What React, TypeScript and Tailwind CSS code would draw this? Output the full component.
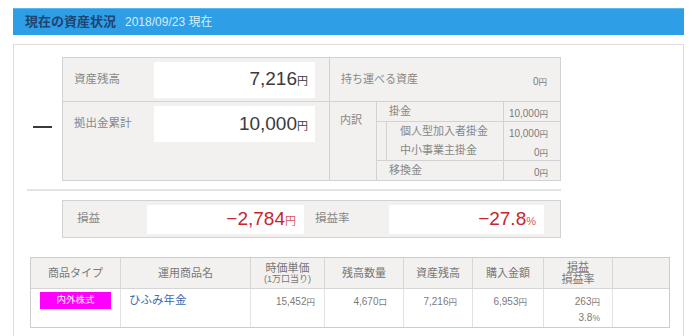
import React from "react";

const border = "border-[#d2d2d2]";

const Yen: React.FC<{ v: string; big?: boolean; red?: boolean; unit?: string }> = ({ v, big, red, unit = "円" }) => (
  <span className={`whitespace-nowrap ${red ? "text-[#c4262e]" : big ? "text-[#3a3a3a]" : "text-[#7a7a7a]"}`}>
    <span className={big ? "text-[19px]" : "text-[10px]"}>{v}</span>
    <span className={`${big ? "text-[11px]" : "text-[8.5px]"} ${red ? "text-[#d9575d]" : ""}`}>{unit}</span>
  </span>
);

const SubRow: React.FC<{ label: string; value: string; indent?: boolean }> = ({ label, value, indent }) => (
  <div className="flex h-[19px] items-center">
    <span className={`flex-1 text-[11px] text-[#888] ${indent ? "pl-[13px]" : "pl-[12px]"}`}>{label}</span>
    <div className={`w-[57px] h-full border-l ${border} flex items-center justify-end pr-[12px]`}>
      <Yen v={value} />
    </div>
  </div>
);

const cols = [
  { w: "w-[90px]", h: "商品タイプ" },
  { w: "w-[130px]", h: "運用商品名" },
  { w: "w-[74px]", h: "時価単価" },
  { w: "w-[79px]", h: "残高数量" },
  { w: "w-[69px]", h: "資産残高" },
  { w: "w-[71px]", h: "購入金額" },
  { w: "w-[69px]", h: "損益" },
];

export default function App() {
  return (
    <div className="w-[700px] h-[336px] overflow-hidden bg-white font-['Liberation_Sans','Noto_Sans_CJK_JP',sans-serif]">
      <div className="mt-[8px] ml-[13px] w-[671px] h-[27px] bg-[#2e9ee6] border-t border-[#5db6ee] flex items-center pl-[12px]">
        <span className="text-[13px] font-bold text-[#1f4470]">現在の資産状況</span>
        <span className="ml-[9px] text-[12px] text-[#d8ecfb]">2018/09/23 現在</span>
      </div>

      <div className="mt-[9px] ml-[13px] w-[671px] h-[300px] border border-b-0 border-[#dcdcdc] pt-[12px]">
        {/* summary */}
        <div className="flex">
          <div className="w-[48px] pt-[69px]">
            <div className="ml-[19px] w-[19px] h-[2px] bg-[#3a3a3a]" />
          </div>
          <div className={`w-[499px] border ${border} bg-[#f2f1f0] flex`}>
            <div className={`w-[267px] border-r ${border}`}>
              <div className={`h-[44px] border-b ${border} flex items-center pl-[11px] pr-[14px]`}>
                <span className="text-[11.5px] text-[#888]">資産残高</span>
                <div className="ml-auto w-[161px] h-[36px] bg-white flex items-center justify-end pr-[7px]">
                  <Yen v="7,216" big />
                </div>
              </div>
              <div className="h-[78px] pt-[4px] pl-[11px] pr-[14px]">
                <div className="flex items-center h-[36px]">
                  <span className="text-[11.5px] text-[#888]">拠出金累計</span>
                  <div className="ml-auto w-[161px] h-[36px] bg-white flex items-center justify-end pr-[7px]">
                    <Yen v="10,000" big />
                  </div>
                </div>
              </div>
            </div>
            <div className="flex-1">
              <div className={`h-[44px] border-b ${border} flex items-center pl-[11px] pr-[13px]`}>
                <span className="text-[11px] text-[#888]">持ち運べる資産</span>
                <span className="ml-auto"><Yen v="0" /></span>
              </div>
              <div className="flex h-[78px]">
                <div className={`w-[47px] border-r ${border} pl-[10px] pt-[10px] text-[11px] text-[#888]`}>内訳</div>
                <div className="flex-1">
                  <div className={`border-b ${border}`}>
                    <SubRow label="掛金" value="10,000" />
                  </div>
                  <div className={`flex border-b ${border}`}>
                    <div className={`w-[10px] border-r ${border}`} />
                    <div className="flex-1">
                      <SubRow label="個人型加入者掛金" value="10,000" indent />
                      <SubRow label="中小事業主掛金" value="0" indent />
                    </div>
                  </div>
                  <SubRow label="移換金" value="0" />
                </div>
              </div>
            </div>
          </div>
        </div>

        <div className="mt-[8px] ml-[13px] w-[534px] h-[2px] bg-[#e4e4e4]" />

        {/* profit */}
        <div className={`mt-[9px] ml-[48px] w-[499px] h-[38px] border ${border} bg-[#f2f1f0] flex items-center`}>
          <span className="w-[84px] pl-[14px] text-[11.5px] text-[#888]">損益</span>
          <div className="w-[157px] h-[29px] bg-white flex items-center justify-end pr-[8px]">
            <Yen v="−2,784" big red />
          </div>
          <span className="w-[85px] pl-[11px] text-[11.5px] text-[#888]">損益率</span>
          <div className="w-[155px] h-[29px] bg-white flex items-center justify-end pr-[8px]">
            <Yen v="−27.8" big red unit="%" />
          </div>
        </div>

        {/* holdings table */}
        <div className="mt-[19px] ml-[16px] w-[640px] border border-[#cccccc]">
          <div className="flex h-[31px] bg-[#f2f1f0] border-b border-[#d6d6d6] text-[11px] text-[#777]">
            {cols.map((c, i) => (
              <div key={i} className={`${c.w} border-r border-[#d6d6d6] flex flex-col items-center justify-center leading-[12px]`}>
                {i === 2 ? (
                  <>
                    <span>時価単価</span>
                    <span className="text-[9px] leading-[11px]">(1万口当り)</span>
                  </>
                ) : i === 6 ? (
                  <>
                    <span className="underline decoration-[#999]">損益</span>
                    <span>損益率</span>
                  </>
                ) : (
                  <span>{c.h}</span>
                )}
              </div>
            ))}
            <div className="flex-1" />
          </div>
          <div className="flex h-[38px] text-[10px] text-[#777]">
            <div className="w-[90px] border-r border-[#e2e2e2] pt-[3px] pl-[9px]">
              <div className="w-[71px] h-[17px] bg-[#ff00ff] text-white text-[9.5px] flex items-center justify-center">内外株式</div>
            </div>
            <div className="w-[130px] border-r border-[#e2e2e2] pl-[8px] pt-[3px] text-[11.5px] text-[#3b6db3]">ひふみ年金</div>
            <div className="w-[74px] border-r border-[#e2e2e2] pr-[9px] pt-[5px] text-right"><Yen v="15,452" /></div>
            <div className="w-[79px] border-r border-[#e2e2e2] pr-[16px] pt-[5px] text-right"><Yen v="4,670" unit="口" /></div>
            <div className="w-[69px] border-r border-[#e2e2e2] pr-[15px] pt-[5px] text-right"><Yen v="7,216" /></div>
            <div className="w-[71px] border-r border-[#e2e2e2] pr-[16px] pt-[5px] text-right"><Yen v="6,953" /></div>
            <div className="w-[69px] border-r border-[#e2e2e2] pr-[12px] pt-[5px] text-right leading-[16px]">
              <div><Yen v="263" /></div>
              <div><Yen v="3.8" unit="%" /></div>
            </div>
            <div className="flex-1" />
          </div>
        </div>
      </div>
    </div>
  );
}
